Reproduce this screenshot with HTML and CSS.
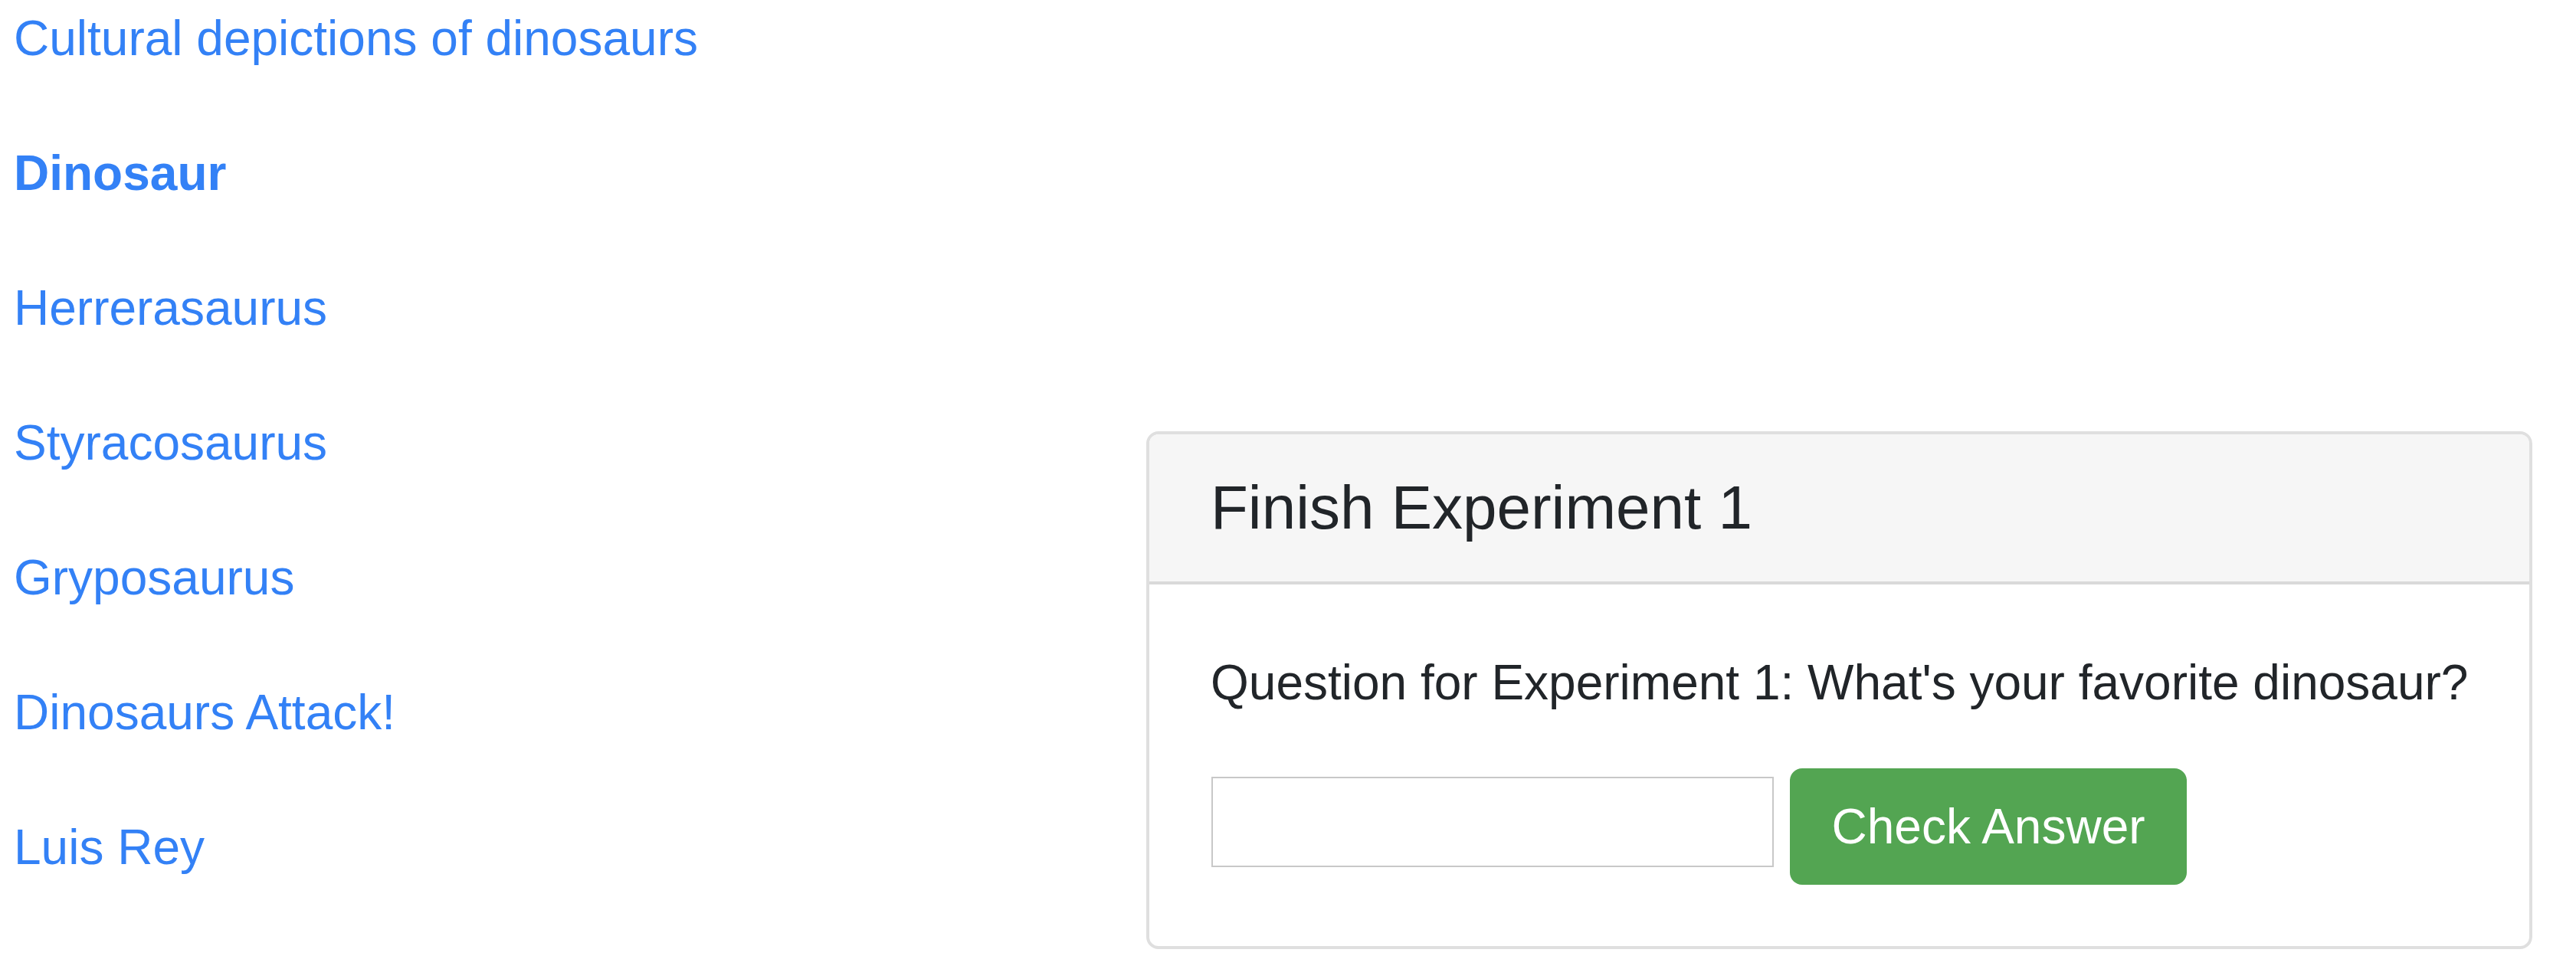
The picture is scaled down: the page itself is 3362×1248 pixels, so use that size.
FILE: index.html
```html
<!DOCTYPE html>
<html lang="en">
<head>
<meta charset="utf-8">
<title>Dinosaurs</title>
<link rel="stylesheet" href="styles.css">
</head>
<body>
<div class="page">
  <nav class="links">
    <a class="link" href="#">Cultural depictions of dinosaurs</a>
    <a class="link link-current" href="#">Dinosaur</a>
    <a class="link" href="#">Herrerasaurus</a>
    <a class="link" href="#">Styracosaurus</a>
    <a class="link" href="#">Gryposaurus</a>
    <a class="link" href="#">Dinosaurs Attack!</a>
    <a class="link" href="#">Luis Rey</a>
  </nav>
  <section class="card">
    <div class="card-header">
      <h5 class="card-title">Finish Experiment 1</h5>
    </div>
    <div class="card-body">
      <p class="question">Question for Experiment 1: What's your favorite dinosaur?</p>
      <div class="answer-row">
        <input class="answer-input" type="text">
        <button class="btn-success" type="button">Check Answer</button>
      </div>
    </div>
  </section>
</div>
</body>
</html>
```

FILE: styles.css
```css
html, body {
  margin: 0;
  padding: 0;
  background: #ffffff;
}

body {
  font-family: "Liberation Sans", Arial, Helvetica, sans-serif;
  font-size: 64px;
  line-height: 96px;
  color: #212529;
}

.page {
  display: flex;
  align-items: flex-start;
  padding: 2px 0 0 18px;
}

.links {
  display: flex;
  flex-direction: column;
  gap: 80px;
  width: 1478px;
  flex: none;
}

.link {
  color: #3381f6;
  text-decoration: none;
  line-height: 96px;
  align-self: flex-start;
  white-space: nowrap;
}

.link-current {
  font-weight: bold;
}

.card {
  flex: none;
  width: 1809px;
  box-sizing: border-box;
  margin-top: 561px;
  border: 4px solid #dfdfdf;
  border-radius: 16px;
  background: #ffffff;
  overflow: hidden;
}

.card-header {
  background: #f6f6f6;
  border-bottom: 4px solid #d9d9d9;
  padding: 48px 80px;
}

.card-title {
  margin: 0;
  font-size: 80px;
  line-height: 96px;
  font-weight: normal;
  color: #212529;
  white-space: nowrap;
}

.card-body {
  padding: 80px;
}

.question {
  margin: 0 0 64px 0;
  font-size: 64px;
  line-height: 96px;
  white-space: nowrap;
}

.answer-row {
  display: flex;
  align-items: flex-start;
  gap: 21px;
}

.answer-input {
  box-sizing: border-box;
  width: 734px;
  height: 118px;
  margin: 11px 0 0 1px;
  border: 2px solid #c8c8c8;
  background: #ffffff;
  font-family: inherit;
  font-size: 64px;
  padding: 0 8px;
  outline: none;
}

.btn-success {
  box-sizing: border-box;
  width: 518px;
  height: 152px;
  border: none;
  border-radius: 16px;
  background: #53a552;
  color: #ffffff;
  font-family: inherit;
  font-size: 64px;
  line-height: 96px;
  padding: 0;
  cursor: pointer;
  white-space: nowrap;
}
```
